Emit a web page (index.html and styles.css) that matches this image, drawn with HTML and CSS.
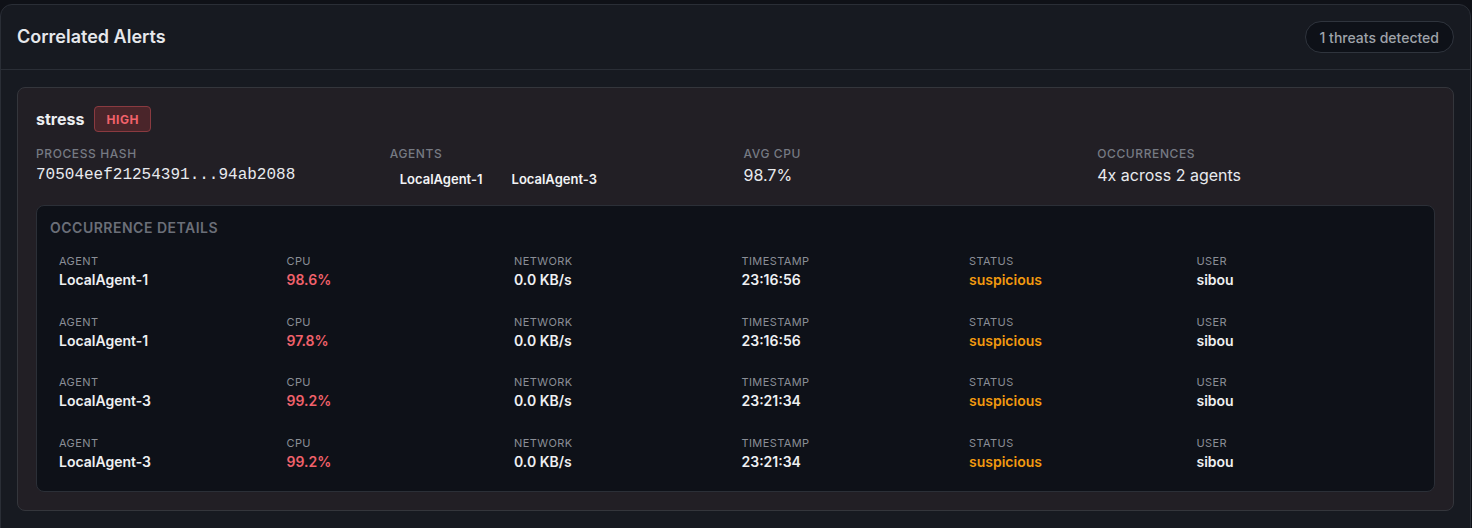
FILE: index.html
```html
<!DOCTYPE html>
<html lang="en">
<head>
<meta charset="utf-8">
<title>Correlated Alerts</title>
<link rel="stylesheet" href="styles.css">
</head>
<body>
<section class="panel">
  <header class="panel-head">
    <h2 class="panel-title">Correlated Alerts</h2>
    <span class="count-pill">1 threats detected</span>
  </header>
  <div class="panel-body">
    <article class="alert">
      <div class="alert-head">
        <span class="proc-name">stress</span>
        <span class="sev sev-high">HIGH</span>
      </div>
      <div class="summary">
        <div class="field">
          <div class="field-label">Process Hash</div>
          <div class="field-value mono">70504eef21254391...94ab2088</div>
        </div>
        <div class="field">
          <div class="field-label">Agents</div>
          <div class="chips">
            <span class="chip">LocalAgent-1</span>
            <span class="chip">LocalAgent-3</span>
          </div>
        </div>
        <div class="field">
          <div class="field-label">Avg CPU</div>
          <div class="field-value">98.7%</div>
        </div>
        <div class="field">
          <div class="field-label">Occurrences</div>
          <div class="field-value">4x across 2 agents</div>
        </div>
      </div>
      <div class="details">
        <div class="details-title">Occurrence Details</div>
        <div class="occ">
          <div class="cell"><div class="c-label">Agent</div><div class="c-value">LocalAgent-1</div></div>
          <div class="cell"><div class="c-label">CPU</div><div class="c-value red">98.6%</div></div>
          <div class="cell"><div class="c-label">Network</div><div class="c-value">0.0 KB/s</div></div>
          <div class="cell"><div class="c-label">Timestamp</div><div class="c-value">23:16:56</div></div>
          <div class="cell"><div class="c-label">Status</div><div class="c-value orange">suspicious</div></div>
          <div class="cell"><div class="c-label">User</div><div class="c-value">sibou</div></div>
        </div>
        <div class="occ">
          <div class="cell"><div class="c-label">Agent</div><div class="c-value">LocalAgent-1</div></div>
          <div class="cell"><div class="c-label">CPU</div><div class="c-value red">97.8%</div></div>
          <div class="cell"><div class="c-label">Network</div><div class="c-value">0.0 KB/s</div></div>
          <div class="cell"><div class="c-label">Timestamp</div><div class="c-value">23:16:56</div></div>
          <div class="cell"><div class="c-label">Status</div><div class="c-value orange">suspicious</div></div>
          <div class="cell"><div class="c-label">User</div><div class="c-value">sibou</div></div>
        </div>
        <div class="occ">
          <div class="cell"><div class="c-label">Agent</div><div class="c-value">LocalAgent-3</div></div>
          <div class="cell"><div class="c-label">CPU</div><div class="c-value red">99.2%</div></div>
          <div class="cell"><div class="c-label">Network</div><div class="c-value">0.0 KB/s</div></div>
          <div class="cell"><div class="c-label">Timestamp</div><div class="c-value">23:21:34</div></div>
          <div class="cell"><div class="c-label">Status</div><div class="c-value orange">suspicious</div></div>
          <div class="cell"><div class="c-label">User</div><div class="c-value">sibou</div></div>
        </div>
        <div class="occ">
          <div class="cell"><div class="c-label">Agent</div><div class="c-value">LocalAgent-3</div></div>
          <div class="cell"><div class="c-label">CPU</div><div class="c-value red">99.2%</div></div>
          <div class="cell"><div class="c-label">Network</div><div class="c-value">0.0 KB/s</div></div>
          <div class="cell"><div class="c-label">Timestamp</div><div class="c-value">23:21:34</div></div>
          <div class="cell"><div class="c-label">Status</div><div class="c-value orange">suspicious</div></div>
          <div class="cell"><div class="c-label">User</div><div class="c-value">sibou</div></div>
        </div>
      </div>
    </article>
  </div>
</section>
</body>
</html>
```
FILE: styles.css
```css
* { box-sizing: border-box; }

html, body {
  margin: 0;
  background: #0f1117;
}

body {
  padding: 4px 1px 0 0;
  font-family: Inter, "Noto Sans", "Liberation Sans", sans-serif;
  color: #e5e7eb;
  overflow: hidden;
}

.panel {
  background: #171a21;
  border: 1px solid #2a2e36;
  border-radius: 12px;
  min-height: 540px;
}

.panel-head {
  display: flex;
  align-items: center;
  justify-content: space-between;
  height: 65px;
  padding: 0 16px;
  border-bottom: 1px solid #2a2e36;
}

.panel-title {
  margin: 0;
  font-size: 18px;
  font-weight: 600;
  color: #e6e8ec;
  line-height: 24px;
}

.count-pill {
  display: inline-flex;
  align-items: center;
  height: 32px;
  padding: 0 14px;
  border: 1px solid #2f343d;
  border-radius: 999px;
  background: #0e1118;
  color: #9fa3aa;
  font-size: 14px;
  font-weight: 500;
}

.panel-body {
  padding: 17px 16px;
}

.alert {
  background: #221f25;
  border: 1px solid #34363c;
  border-radius: 8px;
  padding: 18px;
}

.alert-head {
  display: flex;
  align-items: center;
  gap: 10px;
  height: 26px;
}

.proc-name {
  font-size: 16px;
  font-weight: 700;
  color: #eceef1;
}

.sev {
  display: inline-flex;
  align-items: center;
  height: 26px;
  padding: 0 11px;
  border-radius: 4px;
  font-size: 12px;
  font-weight: 700;
  letter-spacing: 0.6px;
}

.sev-high {
  background: #4a252a;
  border: 1px solid #8a3a40;
  color: #f2626b;
}

.summary {
  display: grid;
  grid-template-columns: repeat(4, 1fr);
  gap: 16px;
  margin-top: 14px;
}

.field-label {
  font-size: 12px;
  line-height: 16px;
  font-weight: 500;
  letter-spacing: 0.6px;
  text-transform: uppercase;
  color: #767a83;
  margin-bottom: 1px;
}

.field-value {
  font-size: 16px;
  line-height: 24px;
  color: #e8eaee;
}

.mono {
  font-family: "Liberation Mono", "DejaVu Sans Mono", monospace;
  font-size: 16px;
}

.chips {
  display: flex;
  gap: 9px;
  margin-top: 4px;
}

.chip {
  display: inline-flex;
  align-items: center;
  height: 26px;
  padding: 0 10px;
  font-size: 13px;
  font-weight: 600;
  color: #f2f3f5;
  border-radius: 4px;
}

.details {
  margin-top: 13px;
  background: #0e1118;
  border: 1px solid #2b2f37;
  border-radius: 8px;
  padding: 12px 13px 8px;
}

.details-title {
  font-size: 14px;
  line-height: 20px;
  font-weight: 600;
  letter-spacing: 0.5px;
  text-transform: uppercase;
  color: #6b6f78;
  margin-bottom: 3px;
}

.occ {
  display: grid;
  grid-template-columns: repeat(6, 1fr);
  gap: 12px;
  padding: 12px 9px 11.5px;
}

.c-label {
  font-size: 11px;
  line-height: 16px;
  letter-spacing: 0.4px;
  text-transform: uppercase;
  color: #8a8e96;
}

.c-value {
  margin-top: 1px;
  font-size: 14px;
  line-height: 20px;
  font-weight: 600;
  color: #eef0f2;
}

.red { color: #f0616b; }
.orange { color: #f29a0f; }
```
